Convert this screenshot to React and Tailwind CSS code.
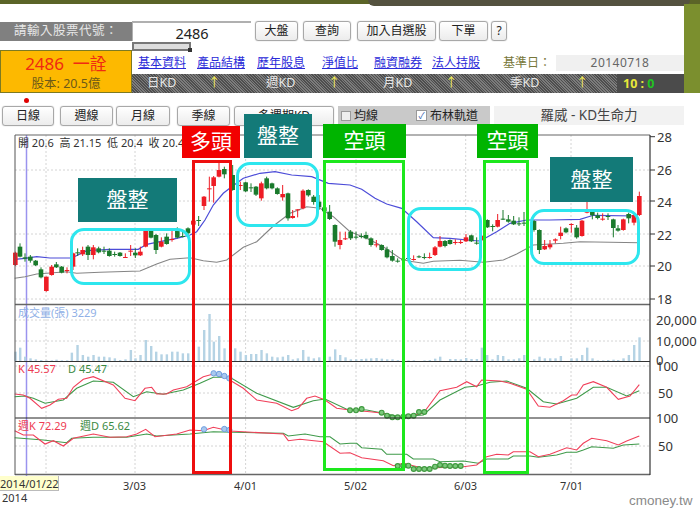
import React from "react";

const cjk = "font-['Noto_Sans','Noto_Sans_CJK_TC',sans-serif]";

// candle data is in 3x crop coordinates: [x, bodyTop, bodyBottom, wickTop, wickBottom, up]
const candlesLeft = [
  [46, 368, 405, 365, 408, 1], [60, 350, 380, 340, 382, 0], [75, 382, 386, 370, 395, 0], [91, 380, 392, 375, 398, 0],
  [107, 392, 406, 390, 408, 0], [123, 418, 442, 412, 445, 0], [139, 440, 483, 440, 485, 1], [155, 410, 435, 405, 437, 1],
  [169, 403, 412, 396, 414, 0], [185, 410, 428, 408, 430, 0], [201, 420, 422, 412, 430, 1], [219, 370, 410, 368, 420, 1],
  [233, 367, 370, 355, 378, 0], [248, 360, 373, 350, 378, 1], [264, 350, 375, 345, 390, 0], [280, 352, 375, 345, 388, 1],
  [296, 355, 367, 350, 370, 0], [312, 362, 364, 350, 372, 0], [328, 362, 378, 355, 380, 0], [344, 372, 374, 365, 380, 0],
  [360, 368, 378, 366, 380, 0], [376, 381, 383, 370, 384, 1], [392, 362, 364, 345, 378, 1], [406, 368, 376, 355, 384, 0],
  [421, 365, 376, 350, 378, 1], [437, 302, 350, 298, 352, 1], [453, 302, 323, 298, 325, 0], [468, 315, 360, 312, 372, 0],
  [484, 335, 350, 322, 352, 1], [500, 320, 342, 310, 344, 0], [516, 327, 329, 300, 335, 1], [532, 302, 323, 292, 325, 0],
  [548, 318, 320, 305, 322, 0], [564, 295, 310, 292, 320, 0], [580, 272, 284, 268, 312, 1], [596, 270, 272, 258, 288, 0],
  [612, 200, 228, 198, 240, 1], [628, 175, 177, 140, 215, 1], [641, 142, 168, 138, 218, 1], [657, 120, 140, 90, 142, 1],
  [673, 117, 133, 110, 145, 0], [698, 135, 180, 105, 182, 0], [721, 165, 167, 155, 180, 1], [737, 157, 184, 155, 186, 0],
  [753, 172, 174, 160, 186, 0], [768, 170, 194, 168, 198, 0], [784, 160, 205, 155, 212, 1], [800, 145, 175, 140, 178, 0],
  [816, 160, 175, 158, 178, 0], [832, 175, 192, 172, 194, 0], [848, 192, 202, 165, 212, 1], [864, 190, 265, 188, 272, 0],
  [878, 258, 264, 240, 266, 1], [893, 238, 240, 238, 262, 1], [909, 182, 235, 178, 238, 1], [925, 180, 196, 178, 200, 0],
  [941, 200, 216, 195, 224, 0], [957, 215, 232, 195, 240, 0], [973, 232, 244, 228, 246, 0], [989, 245, 267, 225, 270, 0],
  [1005, 285, 335, 283, 350, 0], [1020, 330, 345, 305, 358, 1], [1036, 325, 327, 305, 330, 1],
];

const candlesRight = [
  [2, 305, 325, 300, 330, 0], [18, 320, 322, 305, 328, 0], [34, 318, 320, 310, 325, 0], [48, 315, 325, 305, 328, 0],
  [63, 325, 345, 322, 350, 0], [79, 343, 345, 330, 352, 1], [95, 345, 360, 343, 362, 0], [111, 358, 382, 350, 385, 0],
  [127, 378, 392, 360, 395, 0], [143, 392, 394, 385, 398, 0], [160, 388, 390, 382, 392, 0], [175, 384, 386, 378, 390, 0],
  [191, 387, 389, 376, 392, 1], [207, 379, 381, 376, 384, 0], [223, 381, 383, 370, 388, 0], [239, 381, 383, 368, 386, 1],
  [255, 352, 375, 348, 378, 1], [270, 333, 350, 318, 352, 1], [285, 333, 348, 330, 352, 0], [300, 330, 342, 328, 344, 0],
  [316, 336, 338, 328, 344, 1], [332, 336, 338, 330, 342, 1], [348, 322, 334, 312, 336, 1], [364, 316, 334, 314, 336, 0],
  [380, 338, 340, 322, 344, 0], [396, 318, 330, 316, 332, 1], [412, 270, 292, 268, 294, 0], [428, 288, 290, 283, 304, 0],
  [443, 270, 290, 252, 292, 1], [459, 266, 268, 240, 270, 0], [475, 268, 275, 255, 278, 0], [491, 272, 283, 258, 285, 0],
  [507, 280, 282, 262, 288, 0], [522, 278, 280, 246, 288, 0], [552, 273, 300, 270, 305, 0], [568, 300, 360, 298, 372, 0],
  [584, 348, 358, 330, 360, 1], [600, 343, 352, 330, 358, 1], [616, 328, 332, 325, 340, 1], [632, 308, 318, 290, 328, 1],
  [648, 295, 307, 292, 310, 0], [664, 282, 284, 280, 308, 1], [680, 293, 322, 285, 326, 0], [696, 272, 318, 270, 320, 1],
  [711, 242, 248, 215, 250, 1], [727, 243, 256, 240, 268, 0], [743, 256, 264, 248, 268, 0], [758, 266, 268, 250, 272, 1],
  [774, 258, 260, 250, 270, 0], [790, 268, 294, 266, 322, 0], [804, 295, 302, 285, 305, 0], [820, 268, 300, 266, 302, 1],
  [836, 252, 265, 248, 280, 0], [852, 255, 278, 250, 286, 1], [868, 198, 255, 185, 258, 1],
];

const volLeft = [
  [46, 155], [60, 143], [75, 170], [91, 175], [107, 178], [123, 180], [139, 181], [155, 181], [169, 179], [185, 181], [201, 181],
  [215, 158], [232, 135], [248, 165], [264, 170], [280, 165], [296, 170], [312, 170], [328, 172], [344, 175], [360, 180], [376, 178],
  [392, 150], [406, 175], [421, 165], [437, 120], [453, 138], [468, 155], [484, 163], [500, 163], [516, 155], [532, 155], [548, 160],
  [564, 160], [580, 181], [596, 140], [612, 90], [628, 42], [641, 125], [657, 108], [673, 145], [690, 155], [705, 145], [721, 155],
  [737, 165], [753, 162], [768, 162], [784, 150], [800, 160], [816, 170], [832, 172], [848, 170], [864, 165], [878, 178], [893, 175],
  [909, 150], [925, 170], [941, 175], [957, 172], [973, 175], [989, 170], [1005, 148], [1020, 165], [1036, 172],
];

const volRight = [
  [2, 178], [18, 178], [34, 177], [48, 176], [63, 175], [79, 174], [95, 176], [111, 178], [127, 178], [143, 180], [175, 181], [191, 181],
  [223, 181], [239, 180], [255, 176], [270, 170], [300, 177], [316, 177], [332, 178], [348, 174], [364, 177], [380, 177], [395, 143],
  [411, 165], [427, 178], [443, 165], [459, 168], [475, 178], [491, 178], [507, 175], [522, 165], [552, 178], [568, 170], [584, 175],
  [600, 175], [616, 175], [632, 168], [664, 175], [680, 175], [696, 165], [711, 143], [727, 175], [743, 181], [759, 181], [774, 180],
  [790, 179], [804, 180], [820, 175], [836, 165], [852, 135], [868, 112],
];

const blueLine = "44,388 75,385 110,380 150,384 215,384 260,362 330,358 415,358 440,343 480,335 530,325 570,315 590,305 615,270 640,225 670,190 695,170 730,145 780,130 825,125 875,135 935,140 985,160 1050,165 1085,178 1125,205 1160,222 1205,235 1250,275 1300,323 1350,325 1435,333 1450,328 1490,305 1530,280 1580,270 1650,270 1740,268 1780,256 1910,258 1918,245";
const grayLine = "44,445 75,440 110,432 200,425 230,430 300,427 420,423 470,402 510,388 570,383 610,392 650,397 680,390 730,352 770,335 820,288 870,250 920,230 960,235 1000,260 1050,305 1100,325 1150,350 1200,385 1225,393 1270,400 1300,394 1380,391 1450,397 1510,390 1550,372 1600,345 1690,340 1740,335 1920,338";
const kLine = "44,282 70,285 90,295 125,325 150,315 175,298 200,295 220,262 250,238 280,230 340,255 375,295 405,302 435,265 455,262 470,282 500,282 520,270 560,260 610,230 640,222 680,235 730,265 770,300 830,310 875,332 895,325 920,295 945,288 975,300 1010,325 1050,330 1110,335 1150,340 1180,352 1210,350 1270,340 1320,272 1370,262 1400,245 1430,260 1445,240 1500,243 1530,250 1580,268 1615,318 1650,322 1690,302 1715,285 1730,285 1750,255 1780,245 1820,262 1855,298 1890,288 1918,254";
const dLine = "44,290 75,288 100,295 135,310 190,300 230,265 280,243 340,247 400,290 440,275 490,283 550,270 600,250 640,232 690,232 770,280 880,322 940,302 975,297 1040,328 1100,330 1150,340 1200,350 1270,345 1320,300 1395,262 1430,258 1470,247 1520,243 1580,265 1630,305 1670,312 1730,295 1780,262 1820,262 1880,288 1918,272";
const weekK = "44,392 70,405 100,405 135,432 160,422 190,438 220,415 280,402 330,412 380,410 410,402 437,388 465,410 530,402 570,390 610,392 640,382 690,393 850,402 865,422 900,418 970,425 1020,460 1050,458 1085,473 1150,482 1180,497 1210,490 1270,505 1390,500 1430,495 1460,470 1490,463 1525,465 1540,455 1590,455 1615,470 1650,463 1700,443 1730,450 1750,430 1775,415 1820,422 1855,435 1880,423 1918,408";
const weekD = "44,413 130,420 200,428 215,415 280,412 380,412 440,402 470,408 570,402 640,395 700,397 850,400 865,408 915,402 960,410 990,410 1020,432 1050,430 1070,430 1085,443 1145,448 1160,463 1220,463 1240,477 1300,477 1320,485 1390,483 1435,490 1460,477 1525,477 1540,468 1590,468 1615,472 1670,465 1700,457 1730,457 1750,450 1775,440 1840,445 1870,435 1918,432";

const blueDots = [[641, 220], [657, 222], [673, 228], [688, 235], [612, 388], [673, 387], [688, 390]];
const greenDots = [
  [1050, 331], [1068, 331], [1085, 327], [1145, 338], [1161, 347], [1177, 352], [1193, 352], [1210, 350], [1225, 349], [1241, 347], [1257, 336], [1273, 336],
  [1193, 498], [1210, 497], [1225, 497], [1241, 507], [1257, 507], [1273, 507], [1289, 507], [1305, 500], [1320, 495], [1335, 497], [1350, 498], [1366, 498], [1382, 498],
];

const pts = (s, base) =>
  s.split(" ").map((p) => {
    const [x, y] = p.split(",").map(Number);
    return `${(x / 3).toFixed(1)},${(base + y / 3).toFixed(1)}`;
  }).join(" ");

const vGrid = [46, 135, 245.6, 356, 465.7, 571];
const hGrid = [170, 201, 234, 266, 299, 320, 341, 366, 393, 446];

function Candle({ c, dx }) {
  const [x, top, bottom, wickTop, wickBottom, up] = c;
  const color = up ? "#ee1c25" : "#1a7a2c";
  const cx = dx + x / 3;
  return (
    <g>
      <line x1={cx} x2={cx} y1={130 + wickTop / 3} y2={130 + wickBottom / 3} stroke={color} strokeWidth="1" />
      <rect x={cx - 2.3} y={130 + top / 3} width="4.6" height={Math.max((bottom - top) / 3, 1)} fill={color} />
    </g>
  );
}

function Chart() {
  const axisText = "font-['Noto_Sans',sans-serif] text-[13px]";
  return (
    <svg viewBox="0 126 700 384" className="block w-[700px] h-[384px]">
      {vGrid.map((x) => (
        <line key={x} x1={x} x2={x} y1="135" y2="474" stroke="#d4d4d4" strokeDasharray="2 2" />
      ))}
      {hGrid.map((y) => (
        <line key={y} x1="15" x2="650" y1={y} y2={y} stroke="#d4d4d4" strokeDasharray="2 2" />
      ))}
      <line x1="26.5" x2="26.5" y1="135" y2="476" stroke="#9a93ee" strokeWidth="1.5" />

      {volLeft.map(([x, y]) => (
        <rect key={x} x={x / 3 - 1} y={300 + y / 3} width="2.4" height={(183 - y) / 3} fill="#b5d3e4" />
      ))}
      {volRight.map(([x, y]) => (
        <rect key={x} x={350 + x / 3 - 1} y={300 + y / 3} width="2.4" height={(183 - y) / 3} fill="#b5d3e4" />
      ))}

      <polyline points={pts(grayLine, 130)} fill="none" stroke="#858585" strokeWidth="1.1" />
      <polyline points={pts(blueLine, 130)} fill="none" stroke="#4c4cd8" strokeWidth="1.2" />
      {candlesLeft.map((c) => <Candle key={c[0]} c={c} dx={0} />)}
      {candlesRight.map((c) => <Candle key={c[0]} c={c} dx={350} />)}

      <polyline points={pts(dLine, 300)} fill="none" stroke="#3f9a4a" strokeWidth="1.1" />
      <polyline points={pts(kLine, 300)} fill="none" stroke="#f0405a" strokeWidth="1.1" />
      <polyline points={pts(weekD, 300)} fill="none" stroke="#3f9a4a" strokeWidth="1.1" />
      <polyline points={pts(weekK, 300)} fill="none" stroke="#f0405a" strokeWidth="1.1" />
      {blueDots.map(([x, y]) => (
        <circle key={`${x}-${y}`} cx={x / 3} cy={300 + y / 3} r="2.7" fill="#a9c8ee" stroke="#6f9fe0" strokeWidth="1" />
      ))}
      {greenDots.map(([x, y]) => (
        <circle key={`${x}-${y}`} cx={x / 3} cy={300 + y / 3} r="2.4" fill="#7cc97c" stroke="#3f9a3f" strokeWidth="1.2" />
      ))}

      {/* panel frames */}
      <line x1="15" x2="650" y1="135" y2="135" stroke="#666" strokeWidth="1.2" />
      <line x1="15" x2="650" y1="304.5" y2="304.5" stroke="#666" strokeWidth="1.5" />
      <line x1="15" x2="650" y1="361.5" y2="361.5" stroke="#333" />
      <line x1="15" x2="650" y1="418" y2="418" stroke="#222" />
      <line x1="15" x2="650" y1="474.5" y2="474.5" stroke="#666" strokeWidth="1.5" />
      <line x1="15" x2="15" y1="135" y2="475" stroke="#555" />
      <line x1="650" x2="650" y1="135" y2="475" stroke="#333" strokeWidth="1.2" />
      {[136.7, 170, 201, 234, 266, 299].map((y) => (
        <line key={y} x1="650" x2="655" y1={y} y2={y} stroke="#333" />
      ))}

      <g className={axisText} fill="#333">
        <text x="657" y="142">28</text>
        <text x="657" y="175">26</text>
        <text x="657" y="207">24</text>
        <text x="657" y="240">22</text>
        <text x="657" y="271">20</text>
        <text x="657" y="304">18</text>
        <text x="656" y="325">20,000</text>
        <text x="656" y="346">10,000</text>
        <text x="656" y="365">0</text>
        <text x="656" y="371">100</text>
        <text x="658" y="398">50</text>
        <text x="656" y="423">100</text>
        <text x="658" y="451">50</text>
      </g>
      <g className="font-['Noto_Sans',sans-serif] text-[11px]" fill="#333">
        <text x="123" y="490">3/03</text>
        <text x="234" y="490">4/01</text>
        <text x="344" y="490">5/02</text>
        <text x="454" y="490">6/03</text>
        <text x="560" y="490">7/01</text>
        <text x="2" y="502">2014</text>
      </g>
      <g className={`${cjk} text-[11px]`}>
        <text x="18" y="147" fill="#333">開 20.6 &nbsp;高 21.15 &nbsp;低 20.4 &nbsp;收 20.45</text>
        <text x="18" y="317" fill="#8fb0e6">成交量(張) 3229</text>
        <text x="18" y="373" fill="#ee3b52">K 45.57</text>
        <text x="68" y="373" fill="#3a8a44">D 45.47</text>
        <text x="18" y="430" fill="#ee3b52">週K 72.29</text>
        <text x="80" y="430" fill="#3a8a44">週D 65.62</text>
      </g>
      <text x="629" y="505" className="font-['Liberation_Sans',sans-serif] text-[13.5px]" fill="#8a8a8a">cmoney.tw</text>
    </svg>
  );
}

const Tag = ({ className, children }) => (
  <div className={`absolute flex items-center justify-center text-white text-[21px] ${className}`}>{children}</div>
);

const Btn = ({ className = "", children }) => (
  <button className={`shrink-0 h-[20px] border border-[#a8a8a8] rounded-[3px] bg-gradient-to-b from-white to-[#ececec] text-[12px] leading-none text-[#222] shadow-[0_0_1px_#999] ${className}`}>
    {children}
  </button>
);

export default function App() {
  return (
    <div className={`relative w-[700px] h-[510px] overflow-hidden bg-white ${cjk}`}>
      {/* top frame */}
      <div className="flex h-[4px] bg-[#5b6427]">
        <div className="ml-[368px] w-[322px] h-[6px] rounded-b-[8px] bg-[#54523f]" />
      </div>

      <div className="flex h-[89px]">
        <div className="w-[684px] shrink-0 flex pt-[18px]">
          <div className="w-[132px] shrink-0 flex flex-col">
            <div className="h-[19px] bg-[#808080] text-[#e8e8e8] text-[12.5px] tracking-[0.5px] flex items-center justify-center whitespace-nowrap">請輸入股票代號：</div>
            <div className="h-[9px]" />
            <div className="h-[43px] bg-[#fdb900] border border-[#7d7a22] flex flex-col items-center">
              <div className="h-[25px] text-[#f02a12] text-[17px] leading-[25px]">2486&nbsp;&nbsp;一詮</div>
              <div className="text-[#6d5a18] text-[12.5px] leading-[16px]">股本: 20.5億</div>
            </div>
          </div>
          <div className="w-[552px] shrink-0 flex flex-col">
            <div className="flex items-center h-[22px] -mt-[2px]">
              <div className="w-[119px] shrink-0 h-[20px] border-t-2 border-l border-[#b0b0b0] text-center text-[14.5px] leading-[20px] text-[#222]">2486</div>
              <Btn className="w-[43px] ml-[4px]">大盤</Btn>
              <Btn className="w-[48px] ml-[5px]">查詢</Btn>
              <Btn className="w-[79px] ml-[6px]">加入自選股</Btn>
              <Btn className="w-[49px] ml-[3px]">下單</Btn>
              <Btn className="w-[16px] ml-[3px]">?</Btn>
            </div>
            <div className="h-[9px] w-[59px] border-2 border-[#777] bg-[#ddd] relative">
              <div className="absolute -right-[3px] -bottom-[3px] w-[4px] h-[4px] bg-[#333]" />
            </div>
            <div className="h-[23px] flex items-center text-[12px] text-[#2a2ad8] pl-[6px] whitespace-nowrap">
              <span className="underline w-[59px]">基本資料</span>
              <span className="underline w-[60px]">產品結構</span>
              <span className="underline w-[65px]">歷年股息</span>
              <span className="underline w-[52px]">淨值比</span>
              <span className="underline w-[58px]">融資融券</span>
              <span className="underline w-[71px]">法人持股</span>
              <span className="text-[#77773a] w-[53px]">基準日：</span>
              <span className="w-[128px] h-[16px] bg-[#f0f0f0] text-[#666] text-center leading-[16px] tracking-[0.5px]">20140718</span>
            </div>
            <div className="h-[19px] flex items-center text-[12.5px] text-[#e6e6e6] whitespace-nowrap bg-[repeating-linear-gradient(45deg,#4e4e4e_0,#4e4e4e_1px,#7c7c7c_1px,#7c7c7c_2px)]">
              <span className="ml-[15px] w-[61px]">日KD</span>
              <span className="w-[58px] text-[#f3ef5a]">↑</span>
              <span className="w-[62px]">週KD</span>
              <span className="w-[55px] text-[#f3ef5a]">↑</span>
              <span className="w-[62px]">月KD</span>
              <span className="w-[65px] text-[#f3ef5a]">↑</span>
              <span className="w-[66px]">季KD</span>
              <span className="w-[41px] text-[#f3ef5a]">↑</span>
              <span className="w-[67px] h-full bg-[#4b4b4b] pl-[6px] font-bold leading-[19px] text-[#e8e83a]">10 : <span className="text-[#22c322]">0</span></span>
            </div>
          </div>
        </div>
        <div className="w-[16px] bg-[#7b8f2e]" />
      </div>

      {/* period toolbar */}
      <div className="relative h-[33px] pt-[13px] pl-[2px] flex">
        <div className="absolute left-[24px] top-[5px] w-[5px] h-[5px] rounded-full bg-[#e00000]" />
        <Btn className="w-[52px]">日線</Btn>
        <Btn className="w-[53px] ml-[6px]">週線</Btn>
        <Btn className="w-[54px] ml-[3px]">月線</Btn>
        <Btn className="w-[53px] ml-[7px]">季線</Btn>
        <Btn className="w-[100px] ml-[4px]">多週期KD</Btn>
        <div className="ml-[4px] shrink-0 w-[152px] h-[19px] bg-[#c9c9c9] flex items-center text-[12px] text-[#222] whitespace-nowrap">
          <span className="w-[10px] h-[10px] ml-[3px] border border-[#999] bg-[#eee]" />
          <span className="ml-[3px] w-[62px]">均線</span>
          <span className="w-[11px] h-[11px] border border-[#999] bg-white text-[#3b5fb0] text-[9px] leading-[9px] text-center">✓</span>
          <span className="ml-[3px]">布林軌道</span>
        </div>
        <div className="ml-[4px] shrink-0 w-[190px] h-[19px] bg-[#f2f2f2] text-[13.5px] text-[#444] text-center leading-[19px] whitespace-nowrap">羅威 - KD生命力</div>
      </div>

      <Chart />

      {/* annotations over the chart */}
      <Tag className="left-[78px] top-[178px] w-[99px] h-[44px] bg-[#137a78]">盤整</Tag>
      <Tag className="left-[550px] top-[157px] w-[83px] h-[45px] bg-[#137a78]">盤整</Tag>
      <Tag className="left-[244px] top-[114px] w-[68px] h-[44px] bg-[#137a78]">盤整</Tag>
      <Tag className="left-[182px] top-[126px] w-[58px] h-[32px] bg-[#f20000]">多頭</Tag>
      <Tag className="left-[323px] top-[124px] w-[83px] h-[34px] bg-[#00b400]">空頭</Tag>
      <Tag className="left-[477px] top-[124px] w-[61px] h-[34px] bg-[#00b400]">空頭</Tag>
      <div className="absolute left-[192px] top-[160px] w-[40px] h-[314px] border-[3px] border-[#ee0f0f]" />
      <div className="absolute left-[323px] top-[160px] w-[82px] h-[311px] border-[3px] border-[#1de81d]" />
      <div className="absolute left-[483px] top-[160px] w-[46px] h-[314px] border-[3px] border-[#1de81d]" />
      <div className="absolute left-[70px] top-[228px] w-[121px] h-[57px] rounded-[14px] border-[3px] border-[#2de6ee]" />
      <div className="absolute left-[236px] top-[162px] w-[83px] h-[65px] rounded-[14px] border-[3px] border-[#2de6ee]" />
      <div className="absolute left-[407px] top-[207px] w-[75px] h-[64px] rounded-[14px] border-[3px] border-[#2de6ee]" />
      <div className="absolute left-[530px] top-[209px] w-[110px] h-[56px] rounded-[14px] border-[3px] border-[#2de6ee]" />
      <div className="absolute left-0 top-[476px] w-[59px] h-[15px] bg-[#ffffcc] border-r border-b border-[#bbb] text-[11px] leading-[15px] text-[#333] text-right pr-[3px] whitespace-nowrap font-['Noto_Sans',sans-serif]">2014/01/22</div>
    </div>
  );
}
